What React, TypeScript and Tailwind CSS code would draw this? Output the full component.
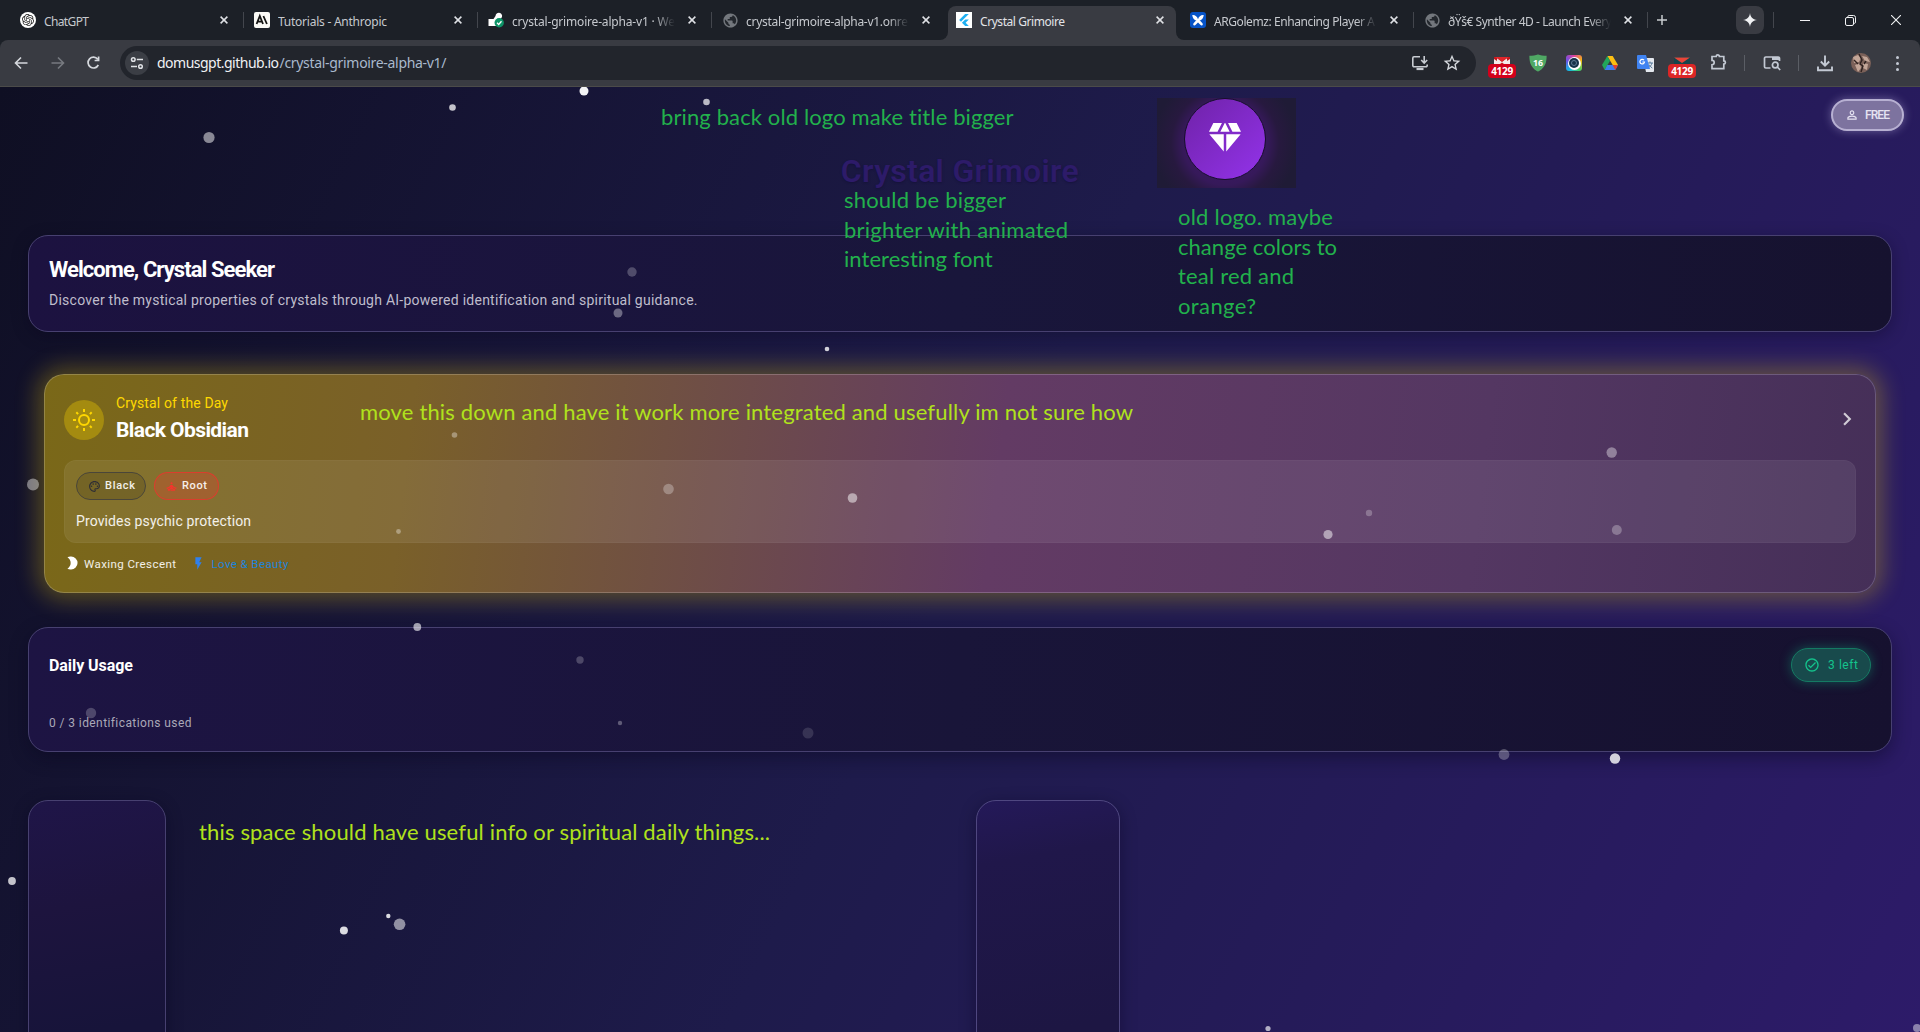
import { useLayoutEffect, useRef, useState, type ReactNode } from "react";
import {
  MdChevronRight,
  MdDiamond,
  MdFlashOn,
  MdOutlineCheckCircle,
  MdOutlinePalette,
  MdPersonOutline,
  MdPublic,
  MdSelfImprovement,
  MdStarOutline,
} from "react-icons/md";
import { SiOpenai, SiFlutter } from "react-icons/si";

/** Single line of text whose tracking is tuned so that it spans `w` pixels. */
function Fit({ w, children, className = "" }: { w: number; children: string; className?: string }) {
  const ref = useRef<HTMLSpanElement>(null);
  const [gap, setGap] = useState(0);
  useLayoutEffect(() => {
    if (ref.current) {
      const natural = ref.current.getBoundingClientRect().width;
      setGap((w - natural) / (children.length - 1));
    }
  }, []);
  return (
    <span ref={ref} className={`inline-block whitespace-pre ${className}`} style={{ letterSpacing: gap }}>
      {children}
    </span>
  );
}

function CloseX() {
  return (
    <svg viewBox="0 0 8 8" className="size-2 shrink-0" stroke="#dfe1e5" strokeWidth="1.5">
      <path d="M.6.6l6.8 6.8M7.4.6L.6 7.4" />
    </svg>
  );
}

function Globe() {
  return (
    <span className="flex size-[15px] items-center justify-center rounded-full bg-[#23272d] text-[#73777d]">
      <MdPublic size={17} className="shrink-0" />
    </span>
  );
}

type TabInfo = { title: string; w: number; icon: ReactNode; active?: boolean; fade?: boolean; line?: boolean };

const tabs: TabInfo[] = [
  {
    title: "ChatGPT",
    w: 45,
    line: true,
    icon: (
      <span className="flex size-4 items-center justify-center rounded-full bg-white text-[#222]">
        <SiOpenai size={12} />
      </span>
    ),
  },
  {
    title: "Tutorials - Anthropic",
    w: 109,
    line: true,
    icon: (
      <span className="flex size-4 items-center justify-center rounded-[2px] bg-[#faf9f5]">
        <svg viewBox="0 0 16 16" className="size-4" fill="none" stroke="#141413" strokeWidth="1.8">
          <path d="M2.6 12L5.8 4l3.2 8M3.8 9.6h4M9.4 4l3.5 8" />
        </svg>
      </span>
    ),
  },
  {
    title: "crystal-grimoire-alpha-v1 · We",
    w: 163,
    fade: true,
    line: true,
    icon: (
      <svg viewBox="0 0 16 16" className="size-4">
        <path d="M7.500 4a3.300 3.300 0 1 1 5.500 2.500L9.500 8v6H.5V7h5z" fill="#fff" />
        <circle cx="11.2" cy="10.800" r="4.700" fill="#0d9467" />
        <path d="M9 10.800l1.700 1.700 2.800-3.200" fill="none" stroke="#fff" strokeWidth="1.300" />
      </svg>
    ),
  },
  { title: "crystal-grimoire-alpha-v1.onre", w: 162, fade: true, icon: <Globe /> },
  {
    title: "Crystal Grimoire",
    w: 85,
    active: true,
    icon: (
      <span className="flex size-4 items-center justify-center bg-white text-[#1fb0f2]">
        <SiFlutter size={12} />
      </span>
    ),
  },
  {
    title: "ARGolemz: Enhancing Player A",
    w: 161,
    fade: true,
    line: true,
    icon: (
      <svg viewBox="0 0 16 16" className="size-4">
        <rect width="16" height="16" rx="3" fill="#0653c7" />
        <path
          d="M8 8.500C5.500 9 2.800 7.500 2.300 3c2.700-.3 5 1.500 5.700 4.200C8.700 4.500 11 2.700 13.700 3c-.5 4.500-3.200 6-5.700 5.500z"
          fill="#fff"
        />
        <path d="M7.500 9l-3 3.200M8.500 9l3 3.200" stroke="#fff" strokeWidth="2.600" strokeLinecap="round" />
      </svg>
    ),
  },
  { title: "ðŸš€ Synther 4D - Launch Every", w: 164, fade: true, line: true, icon: <Globe /> },
];

function Tab({ tab }: { tab: TabInfo }) {
  return (
    <div className="relative flex h-[34px] w-[234px] shrink-0 items-center pl-[18px]">
      {tab.active && (
        <div className="absolute inset-y-0 left-[10px] right-[-4px] rounded-t-lg bg-[#393b42]">
          <div className="absolute bottom-0 left-[-8px] size-2 overflow-hidden">
            <div className="size-2 rounded-br-lg bg-[#1c2027] shadow-[4px_4px_0_4px_#393b42]" />
          </div>
          <div className="absolute bottom-0 right-[-8px] size-2 overflow-hidden">
            <div className="size-2 rounded-bl-lg bg-[#1c2027] shadow-[-4px_4px_0_4px_#393b42]" />
          </div>
        </div>
      )}
      <span className="relative -mt-[6px] flex w-4 justify-center">{tab.icon}</span>
      <div
        className={
          tab.fade
            ? "relative -mt-[7px] ml-2 w-[166px] overflow-hidden [mask-image:linear-gradient(90deg,#000_142px,transparent_163px)]"
            : "relative -mt-[7px] ml-2 w-[166px] overflow-hidden"
        }
      >
        <Fit w={tab.w} className={tab.active ? "text-[12px] leading-5 text-[#e3e4e8]" : "text-[12px] leading-5 text-[#c6c9ce]"}>
          {tab.title}
        </Fit>
      </div>
      <div className="relative -mt-[7px] ml-[10px]">
        <CloseX />
      </div>
      {tab.line && <div className="-mt-[6px] ml-auto mr-[-8px] h-4 w-px bg-[#43464d]" />}
    </div>
  );
}

function BadgeMail({ bright }: { bright?: boolean }) {
  return (
    <div className="flex w-7 flex-col items-center">
      <svg viewBox="0 0 18 7" className="h-[7px] w-[18px]">
        <path d="M1 0h16v7H1z" fill={bright ? "#c4161c" : "#15454c"} />
        <path d={bright ? "M1 2l3 2v3H1zM17 2l-3 2v3h3zM4 1l5 4 5-4v6h-3L9 5.500 7 7H4z" : "M1 .5h16L9 6z"} fill={bright ? "#f4e9e9" : "#e84538"} />
        {bright && <path d="M2 0h14L9 4.500z" fill="#e0262b" />}
      </svg>
      <div
        className={
          bright
            ? "flex h-[14px] w-7 items-center justify-center rounded-[4px] bg-[#d3001b] text-white"
            : "flex h-[14px] w-7 items-center justify-center rounded-[4px] bg-[#dc2626] text-white"
        }
      >
        <Fit w={22} className="text-[10px] font-bold leading-[14px]">
          4129
        </Fit>
      </div>
    </div>
  );
}

function Toolbar() {
  return (
    <div className="flex h-[47px] items-center rounded-t-lg border-b border-[#4b4b49] bg-[#393b42]">
      <div className="ml-[11px] flex w-[105px] items-center gap-[14px]">
        <svg viewBox="0 0 22 16" className="h-4 w-[22px]" fill="none" stroke="#d5d8dd" strokeWidth="1.6">
          <path d="M16.500 8H4.500M10 2.500L4.500 8l5.500 5.500" />
        </svg>
        <svg viewBox="0 0 22 16" className="h-4 w-[22px]" fill="none" stroke="#777a80" strokeWidth="1.6">
          <path d="M4.500 8h12M11 2.500L16.500 8 11 13.500" />
        </svg>
        <svg viewBox="0 0 22 16" className="h-4 w-[22px]" fill="none" stroke="#d5d8dd" strokeWidth="1.700">
          <path d="M14.700 4.200A5.400 5.400 0 1 0 15.300 10M15.600 1.500v4h-4" />
        </svg>
      </div>
      <div className="ml-1 flex h-[34px] w-[1356px] items-center rounded-full bg-[#22252c] pl-[5px] pr-4">
        <div className="flex size-6 items-center justify-center rounded-full bg-[#3b3e45]">
          <svg viewBox="0 0 14 14" className="size-[14px]" fill="none" stroke="#e0e2e6" strokeWidth="1.500">
            <circle cx="3.300" cy="3.500" r="1.800" />
            <path d="M6.800 3.500H13M1 10.500h6" />
            <circle cx="10.500" cy="10.500" r="1.800" />
          </svg>
        </div>
        <div className="ml-2 flex text-[14px] leading-5">
          <Fit w={122} className="text-[#f0f1f4]">
            domusgpt.github.io
          </Fit>
          <Fit w={167} className="ml-px text-[#a9b9cd]">
            /crystal-grimoire-alpha-v1/
          </Fit>
        </div>
        <svg viewBox="0 0 18 16" className="ml-auto h-4 w-[18px]" fill="none" stroke="#c8ccd2" strokeWidth="1.600">
          <path d="M9 1.800H3a1.200 1.200 0 0 0-1.200 1.200v7.500a1.200 1.200 0 0 0 1.200 1.200h12a1.200 1.200 0 0 0 1.200-1.200V9.500M13.200 1v6.500M10.200 5l3 3 3-3" />
          <path d="M5.500 14h7" strokeWidth="2.200" />
        </svg>
        <MdStarOutline size={20} className="ml-[13px] mr-[-2px] text-[#d5d8dd]" />
      </div>
      <div className="ml-[12px] mt-[9px]">
        <BadgeMail bright />
      </div>
      <svg viewBox="0 0 16 16" className="ml-[14px] size-4 scale-110">
        <path d="M8 0c2 1.200 5 1.500 8 1.500C16 9 13 13.500 8 16 3 13.500 0 9 0 1.500 3 1.500 6 1.200 8 0z" fill="#4fa864" />
        <text x="8" y="10.300" textAnchor="middle" className="fill-white text-[8px] font-bold">
          16
        </text>
      </svg>
      <div className="ml-[20px] flex size-4 items-center justify-center rounded-[3px] bg-[conic-gradient(#e0409b,#f5b90f,#43d06c,#15b9e8,#6b52e8,#e0409b)]">
        <div className="flex size-[13px] items-center justify-center rounded-full bg-white">
          <div className="flex size-[10px] items-center justify-center rounded-full bg-[#16324a]">
            <div className="size-[6px] rounded-full border border-[#5c7892]" />
          </div>
        </div>
      </div>
      <svg viewBox="0 0 16 14" className="ml-[20px] h-[14px] w-4">
        <path d="M5.300 0h5.400L16 9h-5.300z" fill="#fcbf12" />
        <path d="M5.300 0L0 9l2.700 5L8 4.700z" fill="#22a65a" />
        <path d="M5.300 9H16l-2.700 5H2.700z" fill="#3d7ff0" />
        <path d="M16 9l-2.700 5-2.700-5z" fill="#e5402e" />
      </svg>
      <svg viewBox="0 0 17 17" className="ml-[19px] size-[17px]">
        <path d="M6 3h10a1 1 0 0 1 1 1v12a1 1 0 0 1-1 1H9z" fill="#e4e8ee" />
        <path d="M10 8h6M13 6.500V8M11 13c2-1 3.500-3 4-5M12 9.500c.8 1.500 2 2.800 3.300 3.500" fill="none" stroke="#56789a" strokeWidth="1" />
        <path d="M1 0h8l4 14H1a1 1 0 0 1-1-1V1a1 1 0 0 1 1-1z" fill="#3f83f2" />
        <path d="M7 5.200A2.300 2.300 0 1 0 7.500 7H5.400" fill="none" stroke="#fff" strokeWidth="1.200" />
      </svg>
      <div className="ml-[14px] mt-[9px]">
        <BadgeMail />
      </div>
      <svg viewBox="0 0 18 18" className="ml-[14px] mt-[-2px] size-[18px]" fill="none" stroke="#c3c9d3" strokeWidth="1.700">
        <path d="M2 3.500h4.200a1.600 1.600 0 1 1 3.200 0h4.400v4.400a1.600 1.600 0 1 1 0 3.200v4.500H2v-3.800a2.200 2.200 0 0 0 0-4.400z" />
      </svg>
      <div className="ml-[16px] h-4 w-px bg-[#5b5e65]" />
      <svg viewBox="0 0 18 16" className="ml-[18px] h-4 w-[18px]" fill="none" stroke="#c3c9d3" strokeWidth="1.700">
        <path d="M7.500 13H2.800A1.300 1.300 0 0 1 1.500 11.700V3.300A1.300 1.300 0 0 1 2.800 2h12.400a1.300 1.300 0 0 1 1.300 1.300V6" />
        <path d="M9 3.500h7" strokeWidth="3" />
        <circle cx="12.200" cy="10" r="2.800" />
        <path d="M14.200 12l3 3" />
      </svg>
      <div className="ml-[17px] h-4 w-px bg-[#5b5e65]" />
      <svg viewBox="0 0 16 17" className="ml-[18px] h-[17px] w-4" fill="none" stroke="#c3c9d3" strokeWidth="1.900">
        <path d="M8 .5v10M3.800 6.500L8 10.700l4.200-4.200M1 11.500v3.700h14v-3.700" />
      </svg>
      <div className="ml-[18px] size-5 overflow-hidden rounded-full bg-[#7b6159]">
        <svg viewBox="0 0 20 20" className="size-5">
          <path d="M2 4l5-2 3 3-2 4-5 1zM11 3l5 1 3 5-5-1zM4 12l5-2 1 5-3 4zM12 10l5 1-1 6-4-2z" fill="#c3a698" />
          <path d="M8 1l3 6-2 4 3 2-2 6M3 7l4 4M15 8l-2 3" stroke="#2f2220" strokeWidth="1.400" fill="none" />
        </svg>
      </div>
      <div className="ml-[25px] flex flex-col gap-[3px]">
        <div className="size-[3px] rounded-full bg-[#c3c9d3]" />
        <div className="size-[3px] rounded-full bg-[#c3c9d3]" />
        <div className="size-[3px] rounded-full bg-[#c3c9d3]" />
      </div>
    </div>
  );
}

function Browser() {
  return (
    <div className="bg-[#1c2027] font-['Noto_Sans',sans-serif]">
      <div className="flex h-10 items-end pb-0 pl-[2px]">
        {tabs.map((t) => (
          <Tab key={t.title} tab={t} />
        ))}
        <div className="flex h-10 flex-1 items-center">
          <svg viewBox="0 0 10 10" className="ml-[17px] size-[10px]" stroke="#c8cbd0" strokeWidth="1.500">
            <path d="M5 0v10M0 5h10" />
          </svg>
          <div className="ml-[69px] flex size-7 items-center justify-center rounded-lg bg-[#393b42]">
            <svg viewBox="0 0 14 14" className="size-[14px]" fill="#f1f2f4">
              <path d="M7 0c.5 4 2.500 6.300 7 7-4.500.7-6.500 3-7 7-.5-4-2.500-6.300-7-7 4.500-.7 6.500-3 7-7z" />
            </svg>
          </div>
          <div className="ml-[9px] h-4 w-px bg-[#43464d]" />
          <div className="ml-[26px] h-px w-[10px] bg-[#f1f2f4]" />
          <svg viewBox="0 0 11 11" className="ml-[35px] size-[11px]" fill="none" stroke="#f1f2f4">
            <rect x=".5" y="2.500" width="8" height="8" rx="1.500" />
            <path d="M2.800 2V1.800A1.300 1.300 0 0 1 4.100.5H8.500a2 2 0 0 1 2 2v4.600a1.300 1.300 0 0 1-1.300 1.300" />
          </svg>
          <svg viewBox="0 0 10 10" className="ml-[35px] size-[10px]" stroke="#f1f2f4" strokeWidth="1.100">
            <path d="M0 0l10 10M10 0L0 10" />
          </svg>
        </div>
      </div>
      <Toolbar />
    </div>
  );
}

// x, y (from the top of the page area), radius, opacity
const stars: [number, number, number, number][] = [
  [584, 4, 4.5, 0.95],
  [452.5, 20.5, 3.3, 0.75],
  [706.5, 15, 3.3, 0.7],
  [209, 50.5, 5.6, 0.5],
  [632, 185, 4.7, 0.24],
  [618, 226, 4.5, 0.36],
  [827, 262, 2.3, 0.8],
  [33, 397.5, 6, 0.42],
  [454.5, 348, 2.8, 0.35],
  [668.5, 402, 5.3, 0.28],
  [852.5, 411, 4.8, 0.5],
  [398.5, 444.5, 2.4, 0.35],
  [1611.7, 365.5, 5.2, 0.38],
  [1616.8, 443, 5, 0.28],
  [1369, 426, 3.2, 0.25],
  [1328, 447.5, 4.6, 0.5],
  [417.3, 540, 3.9, 0.6],
  [580, 573, 3.7, 0.22],
  [91, 626, 5.2, 0.22],
  [620, 636, 2.2, 0.3],
  [808, 646, 5.5, 0.13],
  [1504, 667.5, 5.4, 0.28],
  [1615, 671.5, 5.2, 0.8],
  [12, 794, 3.9, 0.75],
  [343.9, 843.5, 4, 0.85],
  [388.3, 829, 2.2, 0.85],
  [399.6, 837.3, 5.8, 0.52],
  [1268, 941.5, 2.6, 0.65],
  [1917, 941, 4, 0.45],
];

function Stars() {
  return (
    <svg viewBox="0 0 1920 945" className="pointer-events-none absolute inset-0 h-[945px] w-[1920px]" fill="#fff">
      {stars.map(([x, y, r, o]) => (
        <circle key={`${x}-${y}`} cx={x} cy={y} r={r} opacity={o} />
      ))}
    </svg>
  );
}

function Notes() {
  return (
    <div className="absolute inset-0 font-['Lato',sans-serif] text-[22px] leading-[29.5px] text-[#22b14c]">
      <div className="absolute left-[661px] top-[15px]">
        <Fit w={353}>bring back old logo make title bigger</Fit>
      </div>
      <div className="absolute left-[844px] top-[98px] flex flex-col items-start">
        <Fit w={162}>should be bigger</Fit>
        <Fit w={224}>brighter with animated</Fit>
        <Fit w={149}>interesting font</Fit>
      </div>
      <div className="absolute left-[1178px] top-[115px] flex flex-col items-start">
        <Fit w={155}>old logo. maybe</Fit>
        <Fit w={159}>change colors to</Fit>
        <Fit w={116}>teal red and</Fit>
        <Fit w={78}>orange?</Fit>
      </div>
      <div className="absolute left-[360px] top-[310px] text-[#b0e21c]">
        <Fit w={773}>move this down and have it work more integrated and usefully im not sure how</Fit>
      </div>
      <div className="absolute left-[199px] top-[730px] text-[#b0e21c]">
        <Fit w={571}>this space should have useful info or spiritual daily things...</Fit>
      </div>
    </div>
  );
}

export default function App() {
  return (
    <div className="h-[1032px] w-[1920px] overflow-hidden">
      <Browser />
      <main className="relative h-[945px] overflow-hidden bg-[linear-gradient(116.2deg,#0f0f23_0%,#1e1b4b_50%,#2d1b69_100%)] px-7 font-['Roboto',sans-serif]">
        <header className="relative flex h-[148px] justify-center pt-[64px]">
          <h1 className="text-[32px] font-semibold leading-10 text-[#2d1b69] [text-shadow:0_1px_2px_rgba(15,12,50,0.5)]">
            <Fit w={238}>Crystal Grimoire</Fit>
          </h1>
          <button className="absolute right-[-12px] top-[12px] flex h-8 w-[73px] items-center rounded-full border-2 border-[#b7b0d2] bg-[#7d739f] pl-[12px] text-[#e6e3f2] shadow-[0_0_10px_rgba(190,180,225,0.45)]">
            <MdPersonOutline size={14} />
            <Fit w={25} className="ml-[6px] text-[12px] font-medium leading-4">
              FREE
            </Fit>
          </button>
          <div className="absolute left-[1129px] top-[11px] flex h-[90px] w-[139px] justify-center bg-[#1f1a38] bg-[radial-gradient(circle_at_49%_50%,#401a68_0px,#36195a_42px,#27193f_54px,#1f1b36_72px)] pr-[3px]">
            <div className="flex size-[82px] items-center justify-center rounded-full border border-[#160f2c] bg-[linear-gradient(135deg,#6f22a8,#9333ea)] text-white">
              <MdDiamond size={40} className="mt-[-2px]" />
            </div>
          </div>
        </header>

        <section className="h-[97px] w-[1864px] rounded-[20px] border border-[#474070] bg-[linear-gradient(93deg,#1c1240,#19163b_50%,#16122f)] px-5 pt-5 shadow-[0_4px_16px_rgba(8,6,30,0.35)]">
          <h2 className="text-[22px] font-bold leading-[27px] text-white">
            <Fit w={226}>Welcome, Crystal Seeker</Fit>
          </h2>
          <p className="mt-[7px] text-[14px] leading-5 text-[#bfbdcc]">
            <Fit w={648}>Discover the mystical properties of crystals through AI-powered identification and spiritual guidance.</Fit>
          </p>
        </section>

        <section className="ml-4 mt-[42px] h-[219px] w-[1832px] rounded-[20px] border border-white/20 bg-[linear-gradient(96.8deg,#7a6818_0%,#7a6029_20%,#633b64_52%,#543762_78%,#452f58_100%)] bg-origin-border px-[19px] pt-[18px] shadow-[0_0_22px_7px_rgba(255,215,0,0.28)]">
          <div className="flex h-[50px] items-center">
            <div className="mt-[3px] flex size-10 items-center justify-center rounded-full bg-[#a48b10]">
              <svg viewBox="0 0 24 24" className="size-6" fill="none" stroke="#ffd700" strokeWidth="2">
                <circle cx="12" cy="12" r="5" />
                <path d="M12 1v3M12 20v3M1 12h3M20 12h3M4.300 4.300l1.800 1.800M17.900 17.900l1.800 1.800M4.300 19.700l1.800-1.800M17.900 6.100l1.800-1.800" />
              </svg>
            </div>
            <div className="ml-3">
              <div className="text-[14px] leading-5 text-[#ffd900]">
                <Fit w={112}>Crystal of the Day</Fit>
              </div>
              <div className="mt-[3px] text-[21px] font-bold leading-[28px] text-white">
                <Fit w={133}>Black Obsidian</Fit>
              </div>
            </div>
            <MdChevronRight size={26} className="ml-auto mr-[-4px] mt-[2px] text-white/75" />
          </div>
          <div className="mt-[17px] h-[83px] w-[1792px] rounded-xl border border-white/3 bg-white/8 px-[11px] pt-[11px]">
            <div className="flex gap-2">
              <div className="flex h-[28px] w-[70px] items-center rounded-full border border-[#4a4639] bg-black/12 pl-[11px] text-white/90">
                <MdOutlinePalette size={13} className="text-[#2e2e35]" />
                <Fit w={30} className="ml-1 text-[11px] font-medium leading-4">
                  Black
                </Fit>
              </div>
              <div className="flex h-[28px] w-[65px] items-center rounded-full border border-[#e23a2e]/90 bg-[#e04030]/30 pl-[10px] text-white/90">
                <MdSelfImprovement size={13} className="text-[#f5352c]" />
                <Fit w={25} className="ml-1 text-[11px] font-medium leading-4">
                  Root
                </Fit>
              </div>
            </div>
            <div className="mt-[11px] text-[14px] leading-5 text-white/90">
              <Fit w={175}>Provides psychic protection</Fit>
            </div>
          </div>
          <div className="mt-[13px] flex h-4 items-center text-[11.5px] leading-4">
            <svg viewBox="0 0 12 14" className="mb-[2px] ml-[3px] h-[14px] w-[11px]" fill="#fff">
              <path d="M.5.800A7 7 0 0 1 4.500 0a7 7 0 0 1 0 14 7 7 0 0 1-4-.8C2.800 11.500 4 9.500 4 7S2.800 2.500.5.800z" />
            </svg>
            <Fit w={92} className="ml-[6px] text-white/90">
              Waxing Crescent
            </Fit>
            <MdFlashOn size={15} className="mb-[2px] ml-[15px] text-[#2f80ed]" />
            <Fit w={77} className="ml-[5px] text-[#2183d8]">
              Love &amp; Beauty
            </Fit>
          </div>
        </section>

        <section className="mt-[34px] flex h-[125px] w-[1864px] justify-between rounded-[20px] border border-[#474070] bg-[linear-gradient(94deg,#1d1443,#191539_50%,#16112f)] px-5 pt-5 shadow-[0_6px_18px_rgba(8,6,30,0.45)]">
          <div>
            <h2 className="mt-[4px] text-[16px] font-bold leading-7 text-white">
              <Fit w={84}>Daily Usage</Fit>
            </h2>
            <p className="mt-[33px] text-[12px] leading-5 text-[#aaa8b8]">
              <Fit w={142}>0 / 3 identifications used</Fit>
            </p>
          </div>
          <div className="flex h-[34px] w-20 items-center rounded-full border border-[#157a63] bg-[#184a4c] pl-3 text-[#14c38c] shadow-[0_0_12px_rgba(16,185,129,0.4)]">
            <MdOutlineCheckCircle size={16} />
            <Fit w={30} className="ml-2 text-[12px] leading-4">
              3 left
            </Fit>
          </div>
        </section>

        <div className="mt-12 grid grid-cols-[948px_1fr]">
          <div className="h-[300px] w-[138px] rounded-[20px] border border-[#474070] bg-[linear-gradient(170deg,#1f1548,#1d143e_35%,#17143a_75%)] shadow-[0_4px_16px_rgba(8,6,30,0.4)]" />
          <div className="h-[300px] w-[144px] rounded-[20px] border border-[#4f4780] bg-[linear-gradient(170deg,#241959,#20174a_20%,#1d1643_75%)] shadow-[0_4px_16px_rgba(8,6,30,0.4)]" />
        </div>

        <Stars />
        <Notes />
      </main>
    </div>
  );
}
